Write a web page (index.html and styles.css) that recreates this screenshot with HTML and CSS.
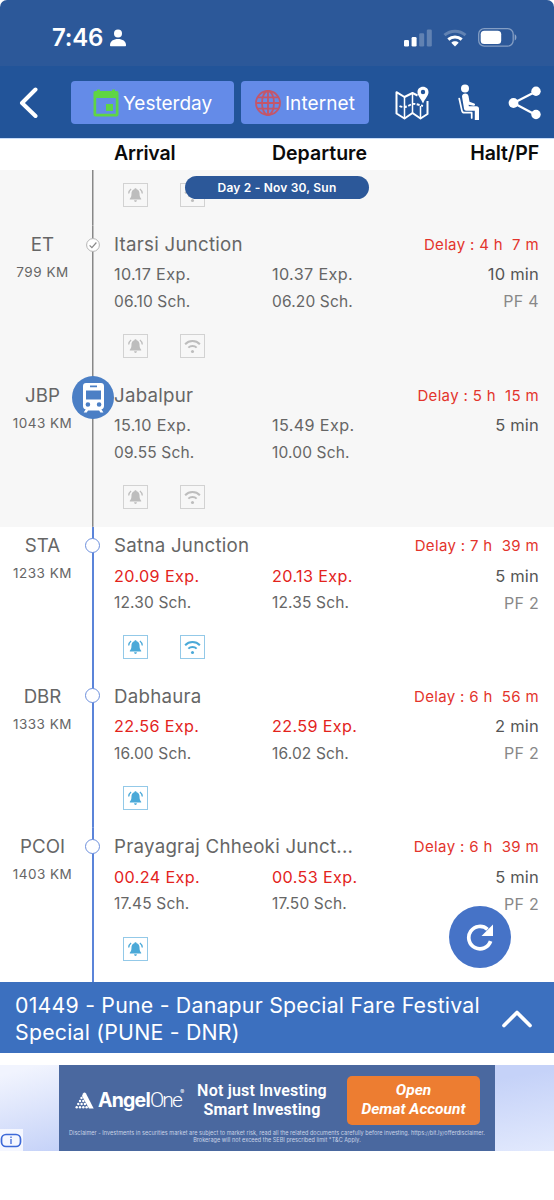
FILE: index.html
```
<!DOCTYPE html>
<html lang="en">
<head>
<meta charset="utf-8">
<title>Train running status</title>
<link rel="stylesheet" href="styles.css">
</head>
<body>
<svg class="defs" width="0" height="0" aria-hidden="true">
  <symbol id="bell" viewBox="0 0 16 16">
    <path fill="currentColor" d="M8 1.200c.7 0 1 .4 1.100 1C11 2.800 12 4.300 12 6.300c0 3 .6 4.300 1.700 5.400v.9H2.300v-.9C3.400 10.600 4 9.300 4 6.300c0-2 1-3.500 2.900-4.100.1-.6.4-1 1.100-1zM6.600 13.300h2.800c-.1 1-.6 1.600-1.400 1.600s-1.300-.6-1.400-1.600z"/>
    <path fill="none" stroke="currentColor" stroke-width="1.300" d="M3.600 2C2.200 3 1.300 4.600 1.200 6.500M12.400 2c1.400 1 2.300 2.600 2.400 4.500"/>
  </symbol>
  <symbol id="wifi" viewBox="0 0 18 16">
    <path fill="none" stroke="currentColor" stroke-width="2.100" d="M1.200 6.200C5.500 1.700 12.500 1.700 16.800 6.200M4.600 9.700C7 7.300 11 7.300 13.400 9.700"/>
    <circle cx="9" cy="13.800" r="1.600" fill="currentColor"/>
  </symbol>
</svg>
<div class="screen">
  <header class="status">
    <span class="clock">7:46</span>
    <svg class="person" width="16" height="18" viewBox="0 0 16 18"><circle cx="8" cy="4.600" r="4" fill="#fff"/><path fill="#fff" d="M0 16.200C0 12 3.500 9.900 8 9.900s8 2.100 8 6.300c0 .7-.3 1-1 1H1c-.7 0-1-.3-1-1z"/></svg>
    <div class="status-right">
      <svg width="28" height="18" viewBox="0 0 28 18"><g fill="#fff"><rect x="0" y="11" width="5" height="6.500" rx="1.300"/><rect x="7.600" y="8" width="5" height="9.500" rx="1.300"/><g opacity=".25"><rect x="15.200" y="4.200" width="5" height="13.300" rx="1.300"/><rect x="22.800" y="0.500" width="5" height="17" rx="1.300"/></g></g></svg>
      <svg width="24" height="18" viewBox="0 0 24 18"><g fill="none" stroke="#fff" stroke-width="3"><path opacity=".25" d="M1.500 6.200C7.500.8 16.500.8 22.500 6.200"/><path d="M5.300 10.500c3.900-3.400 9.500-3.400 13.400 0"/></g><path fill="#fff" d="M8.300 13.700c2.100-1.900 5.300-1.900 7.400 0L12 17.500z"/></svg>
      <svg width="39" height="19" viewBox="0 0 39 19"><rect x=".7" y=".7" width="34.500" height="17.400" rx="5.500" fill="none" stroke="#fff" stroke-opacity=".42" stroke-width="1.300"/><rect x="2.700" y="2.700" width="20.500" height="13.400" rx="3.600" fill="#fff"/><path fill="#fff" fill-opacity=".45" d="M36.700 6.300c2.300.8 2.300 5.400 0 6.200z"/></svg>
    </div>
  </header>

  <nav class="toolbar">
    <svg class="back" width="20" height="32" viewBox="0 0 20 32"><path d="M16.500 2.500 3 16l13.500 13" fill="none" stroke="#fff" stroke-width="4" stroke-linecap="round" stroke-linejoin="round"/></svg>
    <button class="chip chip-day">
      <svg width="26" height="28" viewBox="0 0 26 28"><path fill="#5fd544" fill-rule="evenodd" d="M4 .5h3V2h12V.500h3V2h1.500C25 2 25.500 2.700 25.500 4v21.500c0 1.300-.7 2-2 2h-21c-1.300 0-2-.7-2-2V4c0-1.300.7-2 2-2H4zM3.200 9v15.800h19.600V9z"/><rect x="13" y="15" width="7" height="7" fill="#5fd544"/></svg>
      <span>Yesterday</span>
    </button>
    <button class="chip chip-net">
      <svg width="26" height="26" viewBox="0 0 26 26" fill="none" stroke="#c4566a" stroke-width="1.800"><circle cx="13" cy="13" r="12"/><ellipse cx="13" cy="13" rx="6" ry="12"/><path d="M13 1v24M1 13h24M3 7.300h20M3 18.700h20"/></svg>
      <span>Internet</span>
    </button>
    <svg class="map" width="34" height="34" viewBox="0 0 34 34" fill="none" stroke="#fff" stroke-width="2" stroke-linejoin="round"><path d="M22.500 9.500 17.500 7 9.500 11 1.500 6.200v21.300l8 5 8-5.500 8 5.500 7-4.500V15"/><path stroke-width="1.500" d="M9.500 11v21M17.500 8v19M25.500 20v12"/><path stroke-width="1.900" stroke-dasharray="3 1.500" d="M4.500 20c4 2 7.500.8 10.500-1 4-2.400 7-.5 13 1"/><path fill="#fff" fill-rule="evenodd" stroke="none" d="M28 .8c3.300 0 5.500 2.400 5.500 5.400 0 3.500-3.400 6.200-5.500 11.200-2.100-5-5.500-7.700-5.500-11.200C22.500 3.200 24.700.8 28 .8zm0 3a2.200 2.200 0 1 0 0 4.400 2.200 2.200 0 0 0 0-4.400z"/></svg>
    <svg class="seat" width="23" height="37" viewBox="0 0 23 37"><circle cx="8" cy="4.500" r="4" fill="#fff"/><path fill="#fff" d="M5 12.500c0-3.700 5.800-4 6.500-.5l1 5.800 4.800 1.700c1.300.6.800 2.500-.7 2.200l-5-.9.300 1.500h7.600c1.600 0 2.500.9 2.500 2.500V36h-4.200v-9.300H9.300c-1.400 0-2-.6-2.300-1.900z"/><path d="M2.200 14.500 4.900 26.500c.3 1.500 1 2.200 2.500 2.200h7.300V34" fill="none" stroke="#fff" stroke-width="1.700" stroke-linecap="round" stroke-linejoin="round"/></svg>
    <svg class="share" width="34" height="34" viewBox="0 0 34 34"><path d="M28 5.500 5.500 17 28 29" fill="none" stroke="#fff" stroke-width="2.200"/><g fill="#fff"><circle cx="28" cy="5.300" r="4.700"/><circle cx="5.500" cy="17" r="4.900"/><circle cx="28" cy="28.500" r="4.700"/></g></svg>
  </nav>

  <div class="columns"><span class="w-arr">Arrival</span><span class="w-dep">Departure</span><span class="w-halt">Halt/PF</span></div>

  <main class="list">
    <div class="day">Day 2 - Nov 30, Sun</div>

    <section class="stop past tail">
      <div class="rail"></div>
      <div class="info"><div class="tools"><i class="tool"><svg><use href="#bell"/></svg></i><i class="tool"><svg><use href="#wifi"/></svg></i></div></div>
    </section>

    <section class="stop past">
      <div class="station"><div class="code">ET</div><div class="km">799 KM</div></div>
      <div class="rail"><svg class="dot" width="14" height="14" viewBox="0 0 14 14"><circle cx="7" cy="7" r="6.400" fill="#fff" stroke="#b5b5b5"/><path d="M3.600 7.400 5.900 9.600 10.400 4.500" fill="none" stroke="#888" stroke-width="1.200"/></svg></div>
      <div class="info">
        <div class="head"><span class="name">Itarsi Junction</span><span class="delay">Delay : 4 h&nbsp; 7 m</span></div>
        <div class="line exp"><span>10.17 Exp.</span><span>10.37 Exp.</span><span class="halt">10 min</span></div>
        <div class="line sch"><span>06.10 Sch.</span><span>06.20 Sch.</span><span class="pf">PF 4</span></div>
        <div class="tools"><i class="tool"><svg><use href="#bell"/></svg></i><i class="tool"><svg><use href="#wifi"/></svg></i></div>
      </div>
    </section>

    <section class="stop past">
      <div class="station"><div class="code">JBP</div><div class="km">1043 KM</div></div>
      <div class="rail"><svg class="train" width="42" height="43" viewBox="0 0 42 43"><ellipse cx="21" cy="21.500" rx="21" ry="21.400" fill="#4b7fc5"/><path fill="#fff" fill-rule="evenodd" d="M14 7h15c1.800 0 3 1.200 3 3v20c0 1.700-1 3-2.600 3.300l2 3.200h-3l-1.300-2H16l-1.300 2h-3l2-3.200C12 33 11 31.700 11 30V10c0-1.800 1.200-3 3-3zm0 7.500v9h15v-9zM18 9.500v1.700h7V9.500zM15.900 26.200a2.300 2.300 0 1 0 0 4.600 2.300 2.300 0 0 0 0-4.600zm11.200 0a2.300 2.300 0 1 0 0 4.600 2.300 2.300 0 0 0 0-4.600z"/></svg></div>
      <div class="info">
        <div class="head"><span class="name">Jabalpur</span><span class="delay">Delay : 5 h&nbsp; 15 m</span></div>
        <div class="line exp"><span>15.10 Exp.</span><span>15.49 Exp.</span><span class="halt">5 min</span></div>
        <div class="line sch"><span>09.55 Sch.</span><span>10.00 Sch.</span><span class="pf"></span></div>
        <div class="tools"><i class="tool"><svg><use href="#bell"/></svg></i><i class="tool"><svg><use href="#wifi"/></svg></i></div>
      </div>
    </section>

    <section class="stop next">
      <div class="station"><div class="code">STA</div><div class="km">1233 KM</div></div>
      <div class="rail"><span class="ring"></span></div>
      <div class="info">
        <div class="head"><span class="name">Satna Junction</span><span class="delay">Delay : 7 h&nbsp; 39 m</span></div>
        <div class="line exp"><span>20.09 Exp.</span><span>20.13 Exp.</span><span class="halt">5 min</span></div>
        <div class="line sch"><span>12.30 Sch.</span><span>12.35 Sch.</span><span class="pf">PF 2</span></div>
        <div class="tools"><i class="tool"><svg><use href="#bell"/></svg></i><i class="tool"><svg><use href="#wifi"/></svg></i></div>
      </div>
    </section>

    <section class="stop next">
      <div class="station"><div class="code">DBR</div><div class="km">1333 KM</div></div>
      <div class="rail"><span class="ring"></span></div>
      <div class="info">
        <div class="head"><span class="name">Dabhaura</span><span class="delay">Delay : 6 h&nbsp; 56 m</span></div>
        <div class="line exp"><span>22.56 Exp.</span><span>22.59 Exp.</span><span class="halt">2 min</span></div>
        <div class="line sch"><span>16.00 Sch.</span><span>16.02 Sch.</span><span class="pf">PF 2</span></div>
        <div class="tools"><i class="tool"><svg><use href="#bell"/></svg></i></div>
      </div>
    </section>

    <section class="stop next last">
      <div class="station"><div class="code">PCOI</div><div class="km">1403 KM</div></div>
      <div class="rail"><span class="ring"></span></div>
      <div class="info">
        <div class="head"><span class="name">Prayagraj Chheoki Junct...</span><span class="delay">Delay : 6 h&nbsp; 39 m</span></div>
        <div class="line exp"><span>00.24 Exp.</span><span>00.53 Exp.</span><span class="halt">5 min</span></div>
        <div class="line sch"><span>17.45 Sch.</span><span>17.50 Sch.</span><span class="pf">PF 2</span></div>
        <div class="tools"><i class="tool"><svg><use href="#bell"/></svg></i></div>
      </div>
    </section>

    <button class="refresh"><svg width="28" height="28" viewBox="0 0 28 28"><path d="M24.600 18.200A11.200 11.200 0 1 1 21.500 6.300" fill="none" stroke="#fff" stroke-width="3.700"/><path d="M27 1.500v11.500H15.500z" fill="#fff"/></svg></button>
  </main>

  <footer class="route">
    <div class="route-name">01449 - Pune - Danapur Special Fare Festival<br>Special (PUNE - DNR)</div>
    <svg width="32" height="20" viewBox="0 0 32 20"><path d="M3 16.500 16 3.500l13 13" fill="none" stroke="#fff" stroke-width="3.700" stroke-linecap="round" stroke-linejoin="round"/></svg>
  </footer>

  <aside class="ad">
    <div class="ad-left"><span class="ad-info"><svg width="22" height="15" viewBox="0 0 22 15"><rect x="1.500" y="1.500" width="19" height="12" rx="4.500" fill="none" stroke="#3d69d8" stroke-width="1.700"/><path d="M11 6v5M11 3.600v1.300" stroke="#3d69d8" stroke-width="1.300"/></svg></span></div>
    <div class="ad-body">
      <div class="ad-main">
        <div class="brand">
          <svg width="19" height="17" viewBox="0 0 19 17" fill="#fff"><path d="M8 1.500Q9.500-.5 11 1.500L18.700 16.500H14L7 4z"/><circle cx="6.500" cy="6" r="1.200"/><circle cx="5" cy="9" r="1.200"/><circle cx="8.300" cy="9" r="1.200"/><circle cx="3.300" cy="12" r="1.200"/><circle cx="6.600" cy="12" r="1.200"/><circle cx="9.900" cy="12" r="1.200"/><circle cx="1.700" cy="15.200" r="1.200"/><circle cx="5" cy="15.200" r="1.200"/><circle cx="8.300" cy="15.200" r="1.200"/><circle cx="11.600" cy="15.200" r="1.200"/></svg>
          <span class="brand-a">Angel</span><span class="brand-b">One</span><sup>®</sup>
        </div>
        <div class="slogan"><span>Not just Investing</span><b>Smart Investing</b></div>
        <div class="cta"><span>Open</span><span>Demat Account</span></div>
      </div>
      <div class="legal"><span class="legal-a">Disclaimer - Investments in securities market are subject to market risk, read all the related documents carefully before investing. https://bit.ly/offerdisclaimer.</span><span class="legal-b">Brokerage will not exceed the SEBI prescribed limit *T&amp;C Apply.</span></div>
    </div>
    <div class="ad-right"></div>
  </aside>
</div>
</body>
</html>
```

FILE: styles.css
```
* { box-sizing: border-box; }
body { margin: 0; background: #fff; font-family: Inter, "Liberation Sans", sans-serif; }
button { border: 0; padding: 0; font: inherit; color: inherit; }
svg { display: block; flex: none; }
.defs { position: absolute; }
.screen { width: 554px; height: 1200px; overflow: hidden; display: flex; flex-direction: column; white-space: nowrap; }

.status { height: 66px; flex: none; background: #2c5899; border-radius: 7px 7px 0 0; display: flex; align-items: center; padding: 9px 37px 0 52px; color: #fff; }
.clock { font-size: 24px; font-weight: 600; letter-spacing: -.2px; line-height: 28px; }
.person { margin-left: 7px; }
.status-right { margin-left: auto; display: flex; align-items: center; gap: 11px; }

.toolbar { height: 72px; flex: none; background: #225499; display: flex; align-items: center; padding: 1px 12px 0 19px; color: #fff; }
.chip { height: 43px; background: #648be8; border-radius: 4px; display: flex; align-items: center; justify-content: center; gap: 4px; font-size: 19px; padding-top: 1px; }
.chip-day { width: 163px; margin-left: 32px; }
.chip-net { width: 128px; margin-left: 7px; letter-spacing: .1px; }
.map { margin-left: 26px; }
.seat { margin-left: 28px; }
.share { margin-left: 28px; }

.columns { height: 32px; flex: none; border-top: 1px solid #c7dcfa; display: flex; align-items: center; padding: 0 15px 3px 114px; font-size: 19.500px; font-weight: 600; color: #0b0b0b; }
.w-arr { width: 158px; letter-spacing: -.2px; }
.w-halt { margin-left: auto; letter-spacing: -.1px; }

.list { position: relative; height: 812px; flex: none; overflow: hidden; }
.day { position: absolute; z-index: 2; left: 185px; top: 6px; width: 184px; height: 23px; border-radius: 12px; background: #2c5899; color: #fff; font-size: 12px; font-weight: 600; line-height: 23px; text-align: center; letter-spacing: .2px; }
.stop { height: 150.650px; display: grid; grid-template-columns: 85px 15px 439px; color: #666; }
.past { background: #f7f7f7; }
.tail { height: 55.500px; grid-template-columns: 15px 439px; padding-left: 85px; }
.last { height: 155px; }
.station { padding-top: 3.400px; text-align: center; }
.code { font-size: 18.700px; line-height: 32px; }
.km { font-size: 13.500px; line-height: 23px; letter-spacing: .5px; }
.rail { display: flex; justify-content: center; align-items: flex-start; background: linear-gradient(#888, #888) center / 1.500px 100% no-repeat; }
.next .rail { background-image: linear-gradient(#5b84d9, #5b84d9); background-size: 2px 100%; }
.dot { margin-top: 12px; }
.train { margin: 0 -14px; }
.ring { width: 15px; height: 15px; margin-top: 11px; border: 1.500px solid #6d90dd; border-radius: 50%; background: #fff; }
.info { padding: 3.400px 0 0 14px; }
.head { display: flex; justify-content: space-between; align-items: center; height: 31px; }
.name { font-size: 18.700px; letter-spacing: .26px; }
.delay { font-size: 15px; color: #e3342c; letter-spacing: .34px; }
.line { display: grid; grid-template-columns: 158px 120px 1fr; align-items: center; font-size: 16.200px; letter-spacing: .36px; }
.exp { height: 29px; }
.sch { height: 25px; font-size: 15.500px; letter-spacing: .15px; }
.next .exp span:not(.halt) { color: #e3231c; }
.halt, .pf { text-align: right; }
.halt { font-size: 16.500px; letter-spacing: .2px; color: #555; }
.pf { font-size: 16px; letter-spacing: .3px; color: #888; }
.tools { display: flex; gap: 32px; padding: 20.100px 0 0 9px; }
.tail .tools { padding-top: 9.600px; }
.tool { width: 25px; height: 24px; border: 1px solid #d2d2d2; display: flex; align-items: center; justify-content: center; color: #bdbdbd; }
.tool svg { width: 17px; height: 16px; }
.next .tool { border-color: #93c9e8; color: #4ba9d8; }
.refresh { position: absolute; left: 449px; top: 736px; width: 62px; height: 62px; border-radius: 50%; background: #4673c7; display: flex; align-items: center; justify-content: center; }

.route { height: 71px; flex: none; background: #3c70bf; color: #fff; display: flex; justify-content: space-between; align-items: center; padding: 2px 21px 0 15px; }
.route-name { font-size: 21.300px; line-height: 27px; letter-spacing: .22px; }

.ad { margin-top: 12px; height: 86px; flex: none; display: flex; }
.ad-left { width: 59px; background: linear-gradient(165deg, #f1f4fe 10%, #c5d2f8); display: flex; align-items: flex-end; }
.ad-info { width: 23px; height: 22px; background: #f5f7ff; display: flex; align-items: center; }
.ad-body { width: 436px; background: #4a689f; color: #fff; }
.ad-right { flex: 1; background: linear-gradient(170deg, #c5d2f8 15%, #e2e9fd); }
.ad-main { height: 63px; display: flex; align-items: center; padding: 7px 15px 0 16px; }
.brand { width: 122px; display: flex; align-items: center; font-size: 19.500px; }
.brand-a { font-weight: 700; margin-left: 4px; letter-spacing: -.8px; }
.brand-b { font-family: Roboto, sans-serif; font-size: 21px; font-weight: 300; letter-spacing: -1.800px; }
.brand sup { font-size: 6px; align-self: flex-start; line-height: 8px; margin-left: -1px; }
.slogan { width: 130px; text-align: center; font-family: Roboto, sans-serif; font-size: 16px; line-height: 19px; font-weight: 600; letter-spacing: .2px; display: flex; flex-direction: column; }
.slogan b { font-weight: 700; }
.cta { width: 133px; height: 49px; margin-left: auto; border-radius: 5px; background: #ed7d31; font-family: Roboto, sans-serif; font-size: 15.500px; font-weight: 700; font-style: italic; line-height: 19px; display: flex; flex-direction: column; justify-content: center; text-align: center; }
.legal { display: flex; flex-direction: column; align-items: center; font-size: 5.500px; line-height: 7.300px; padding-top: 2px; letter-spacing: .04px; color: #c9d3e6; }
```
